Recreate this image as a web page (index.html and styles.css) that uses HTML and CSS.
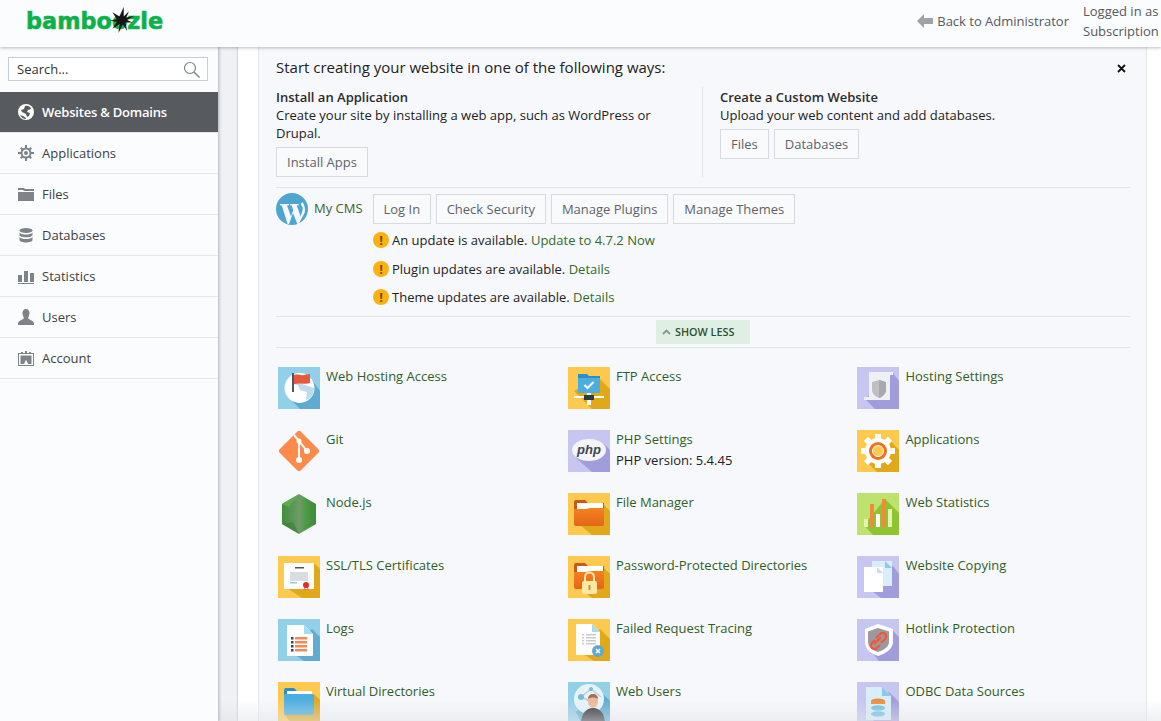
FILE: index.html
```html
<!DOCTYPE html>
<html lang="en">
<head>
<meta charset="utf-8">
<title>Websites &amp; Domains</title>
<link rel="stylesheet" href="styles.css">
</head>
<body>
<div class="app">
  <header class="topbar">
    <div class="logo"><span>bamboozle</span><svg class="logo-star" viewBox="0 0 30 30" width="26" height="26"><path fill="#161616" d="M17 0l0 11 6-6-3 7 9-2-8 5 6 3-8 0 2 10-5-8-5 10 1-10-8 5 5-8-8-1 8-2-5-8 8 5z"/></svg></div>
    <div class="top-right">
      <a class="back"><svg viewBox="0 0 16 14" width="16" height="14"><path fill="#9ea3a8" d="M0 7l7-7v4h9v6H7v4z"/></svg>Back to Administrator</a>
      <div class="logged">Logged in as<br>Subscription</div>
    </div>
  </header>
  <div class="body-row">
    <aside class="sidebar">
      <div class="search-wrap">
        <div class="search"><span>Search...</span><svg viewBox="0 0 17 17" width="17" height="17"><circle cx="7" cy="7" r="5.500" fill="none" stroke="#7d8389" stroke-width="1.200"/><path d="M11 11l5.500 5.500" stroke="#7d8389" stroke-width="1.500"/></svg></div>
      </div>
      <nav class="nav">
        <a class="nav-item active"><svg viewBox="0 0 16 16" width="16" height="16"><circle cx="8" cy="8" r="8" fill="#fff"/><path fill="#575a5f" d="M7 2c3-1 6 1 6 3l-3 1-1 2 3 1-1 3-2 1-1-3-4-2-1-2 3-1zM2 11l3 1 3 2v1c-3 0-5-2-6-4z"/></svg><span class="nav-active-label">Websites &amp; Domains</span></a>
        <a class="nav-item"><svg viewBox="0 0 16 16" width="16" height="16"><g fill="#7d8389"><path d="M8 2.500a5.500 5.500 0 1 0 0 11 5.500 5.500 0 0 0 0-11zm0 2a3.500 3.500 0 1 1 0 7 3.500 3.500 0 0 1 0-7z"/><circle cx="8" cy="8" r="2"/><path d="M7 0h2v3H7zM7 13h2v3H7zM0 7h3v2H0zM13 7h3v2h-3zM2 3.400L3.400 2l2 2L4 5.400zM10.600 12L12 10.600l2 2L12.600 14zM2 12.600l2-2L5.400 12l-2 2zM10.600 4l2-2L14 3.400l-2 2z"/></g></svg>Applications</a>
        <a class="nav-item"><svg viewBox="0 0 16 14" width="16" height="14"><path fill="#7d8389" d="M0 1h6l1 1h9v2H6L5 3H0zM0 5h16v9H0z"/></svg>Files</a>
        <a class="nav-item"><svg viewBox="0 0 14 15" width="16" height="15"><g fill="#7d8389"><ellipse cx="7" cy="2.500" rx="6.500" ry="2.500"/><path d="M.5 4.500c1 1.500 3.500 2 6.500 2s5.500-.5 6.500-2v2.500c0 1.300-3 2.300-6.500 2.300S.5 8.300.5 7zM.5 9c1 1.500 3.500 2 6.500 2s5.500-.5 6.500-2v3c0 1.500-3 2.500-6.500 2.500S.5 13.500.5 12z"/></g></svg>Databases</a>
        <a class="nav-item"><svg viewBox="0 0 16 15" width="16" height="15"><path fill="#7d8389" d="M0 6h4v7H0zM6 2h4v11H6zM12 4h4v9h-4zM0 14h16v1H0z"/></svg>Statistics</a>
        <a class="nav-item"><svg viewBox="0 0 16 16" width="16" height="16"><path fill="#7d8389" d="M8 0c2.200 0 3.500 1.700 3.500 4S10.500 8 10 9c0 1.500 6 2.500 6 5.500V16H0v-1.500C0 11.500 6 10.500 6 9 5.500 8 4.500 6.300 4.500 4S5.800 0 8 0z"/></svg>Users</a>
        <a class="nav-item"><svg viewBox="0 0 16 15" width="16" height="15"><path fill="#7d8389" fill-rule="evenodd" d="M0 2h3V1h2v1h6V1h2v1h3v13H0zm1 1v11h14V3zM2.500 4.500h11V13H10L8 8.500 6 13H2.500zM7 0h2v2H7z"/></svg>Account</a>
      </nav>
    </aside>
    <div class="gutter"></div>
    <main class="content">
      <section class="panel">
        <div class="intro">
          <h2 class="intro-title">Start creating your website in one of the following ways:</h2>
          <svg class="close" viewBox="0 0 9 9" width="9" height="9"><path d="M1 1l7 7M8 1L1 8" stroke="#111" stroke-width="1.800"/></svg>
          <div class="ways">
            <div class="way way-left">
              <h3>Install an Application</h3>
              <p>Create your site by installing a web app, such as WordPress or Drupal.</p>
              <div class="btns"><a class="btn">Install Apps</a></div>
            </div>
            <div class="way way-right">
              <h3>Create a Custom Website</h3>
              <p>Upload your web content and add databases.</p>
              <div class="btns"><a class="btn">Files</a><a class="btn">Databases</a></div>
            </div>
          </div>
        </div>
        <div class="cms">
          <div class="cms-head">
            <svg class="wp" viewBox="0 0 32 32" width="32" height="32"><circle cx="16" cy="16" r="16" fill="#4fa5cf"/><path fill="#f7f8fb" d="M4 11h9v1.300l-2 .3 4 11 2.200-6.500-1.500-4.500-1.500-.3V11h8.500v1.300l-2 .3 4 11 1.800-6c.8-3-.3-4-1.200-5.300-.6-1-.3-2.800 1.500-3C28 12 30 16 28.500 20l-5.800 11h-1.400l-4.300-11-4 11h-1.400L5.800 12.600 4 12.300z"/></svg>
            <span class="cms-name">My CMS</span>
            <div class="btns cms-btns"><a class="btn btn-tight">Log In</a><a class="btn">Check Security</a><a class="btn">Manage Plugins</a><a class="btn">Manage Themes</a></div>
          </div>
          <ul class="alerts">
            <li><i class="warn">!</i>An update is available. <a>Update to 4.7.2 Now</a></li>
            <li><i class="warn">!</i>Plugin updates are available. <a>Details</a></li>
            <li><i class="warn">!</i>Theme updates are available. <a>Details</a></li>
          </ul>
        </div>
        <div class="showbar"><a class="show-less"><svg viewBox="0 0 9 6" width="9" height="6"><path d="M1 5l3.500-3.500L8 5" fill="none" stroke="#7f9c87" stroke-width="1.800"/></svg>SHOW LESS</a></div>
        <div class="tools">
          <a class="tool"><svg viewBox="0 0 42 42"><rect width="42" height="42" fill="#92cfe9"/><path fill="#5fabd2" d="M32 10L42 24V42H22L8 28z"/><circle cx="21.500" cy="21" r="15" fill="#fff"/><path fill="#bcdcec" d="M20 8l6 3-2 6 6 2 6 2c0 6-3 10-8 12l1-8-7-2-2-5-6-1c0-4 3-8 6-9z"/><rect x="14" y="6" width="2" height="19" fill="#455a6b"/><path fill="#e8583c" d="M16 8c4-1.500 6 1 10 0s4-.5 6-1v9c-4 1.500-8 0-11 .5l-5 .5z"/></svg><span class="tool-name">Web Hosting Access</span></a>
          <a class="tool"><svg viewBox="0 0 42 42"><rect width="42" height="42" fill="#fdc94f"/><path fill="#e1a81a" d="M30 10L42 22V42H24L6 24z"/><path fill="#2b8ec7" d="M10 7h9l2 2h11v4H10z"/><rect x="10" y="11" width="22" height="15" rx="1" fill="#4caee0"/><path d="M16.500 18l3 3 6-6" fill="none" stroke="#fff" stroke-width="2"/><rect x="6" y="29" width="30" height="2" fill="#fff"/><rect x="19" y="26" width="4" height="12" fill="#fff"/><rect x="16" y="28" width="10" height="5" fill="#34393f"/></svg><span class="tool-name">FTP Access</span></a>
          <a class="tool"><svg viewBox="0 0 42 42"><rect width="42" height="42" fill="#c6c6f1"/><path fill="#a19cdc" d="M36 6l6 8V42H18L8 32z"/><path fill="#eef0f6" d="M12 5h24v3h-3v25H7v-3h5z"/><path fill="#c0c0c4" d="M15 15l7-2 7 2v8c0 4-4 7-7 8-3-1-7-4-7-8z"/><path fill="#a9a9ae" d="M22 13l7 2v8c0 4-4 7-7 8z"/></svg><span class="tool-name">Hosting Settings</span></a>

          <a class="tool"><svg viewBox="0 0 42 42"><rect x="6" y="6" width="30" height="30" rx="3" transform="rotate(45 21 21)" fill="#fc8a4a"/><path d="M16 5l5 6v19M21 11l8 10" fill="none" stroke="#fff" stroke-width="2"/><circle cx="21" cy="30" r="3" fill="#fff"/><circle cx="29" cy="21" r="3" fill="#fff"/><circle cx="21" cy="11" r="2.500" fill="#fff"/></svg><span class="tool-name">Git</span></a>
          <a class="tool tool-multi"><svg viewBox="0 0 42 42"><rect width="42" height="42" fill="#c6c6f1"/><path fill="#a19cdc" d="M36 14L42 20V42H24L8 28z"/><ellipse cx="21" cy="20" rx="17" ry="11" fill="#f4f4f4"/><text x="21" y="24" class="php-text" text-anchor="middle">php</text></svg><span class="tool-text"><span class="tool-name">PHP Settings</span><span class="tool-sub">PHP version: 5.4.45</span></span></a>
          <a class="tool"><svg viewBox="0 0 42 42"><rect width="42" height="42" fill="#fdc94f"/><path fill="#e1a81a" d="M33 10L42 20V42H20L8 30z"/><g fill="#fff"><circle cx="21" cy="21" r="13"/><path d="M18 4h6v6h-6zM18 32h6v6h-6zM4 18h6v6H4zM32 18h6v6h-6z"/><path d="M18 4h6v6h-6zM18 32h6v6h-6zM4 18h6v6H4zM32 18h6v6h-6z" transform="rotate(45 21 21)"/></g><circle cx="21" cy="21" r="9" fill="#f0701f"/><circle cx="21" cy="21" r="5.500" fill="#fdc94f" stroke="#fff"/></svg><span class="tool-name">Applications</span></a>

          <a class="tool"><svg viewBox="0 0 42 42"><defs><linearGradient id="nodeGrad" x1="0" x2="1" y1="0" y2="0"><stop offset="0" stop-color="#3f8f3c"/><stop offset=".5" stop-color="#6f9a68"/><stop offset=".72" stop-color="#4c9a46"/><stop offset="1" stop-color="#3d8a3a"/></linearGradient></defs><path fill="url(#nodeGrad)" d="M21 1l17 10v20L21 41 4 31V11z"/><path fill="#5fb14d" d="M21 1L4 11l7 3z" opacity=".8"/><path fill="#2f7a30" d="M4 31l17 10-6-12z" opacity=".5"/></svg><span class="tool-name">Node.js</span></a>
          <a class="tool"><svg viewBox="0 0 42 42"><defs><linearGradient id="orangeGrad" x1="0" x2="0" y1="0" y2="1"><stop offset="0" stop-color="#f6811f"/><stop offset="1" stop-color="#e2671a"/></linearGradient></defs><rect width="42" height="42" fill="#fdc94f"/><path fill="#e1a81a" d="M36 12L42 18V42H24L6 27z"/><path fill="#c9581c" d="M6 9a2 2 0 0 1 2-2h9l3 3h16v6H6z"/><path fill="#fff" d="M9 10h26v6H9z"/><path fill="url(#orangeGrad)" d="M6 16h12l4-1h14v16a2 2 0 0 1-2 2H8a2 2 0 0 1-2-2z"/></svg><span class="tool-name">File Manager</span></a>
          <a class="tool"><svg viewBox="0 0 42 42"><rect width="42" height="42" fill="#bde26e"/><path fill="#8ec42f" d="M28 6L42 20V42H16L7 32z"/><rect x="7" y="26" width="4" height="8" fill="#e4f3b4"/><rect x="13" y="11" width="4" height="23" fill="#f18a3a"/><rect x="19" y="21" width="4" height="13" fill="#fff"/><rect x="25" y="6" width="4" height="28" fill="#f18a3a"/><rect x="31" y="16" width="4" height="18" fill="#e4f3b4"/></svg><span class="tool-name">Web Statistics</span></a>

          <a class="tool"><svg viewBox="0 0 42 42"><rect width="42" height="42" fill="#fdc94f"/><path fill="#e1a81a" d="M36 7l6 6V42H24L6 30z"/><rect x="6" y="7" width="30" height="26" fill="#fff"/><rect x="12" y="16" width="18" height="9" fill="#d8dde2"/><rect x="17" y="11" width="9" height="1.500" fill="#555"/><rect x="12" y="26" width="7" height="1.500" fill="#8ecae8"/><circle cx="28" cy="29" r="3" fill="#e32b2b"/><path fill="#e32b2b" d="M26 30h1.500l-.5 5zM28.500 30H30l.5 5z"/></svg><span class="tool-name">SSL/TLS Certificates</span></a>
          <a class="tool"><svg viewBox="0 0 42 42"><rect width="42" height="42" fill="#fdc94f"/><path fill="#e1a81a" d="M36 12L42 18V42H24L6 27z"/><path fill="#c9581c" d="M6 9a2 2 0 0 1 2-2h9l3 3h16v6H6z"/><path fill="#fff" d="M9 10h26v6H9z"/><path fill="url(#orangeGrad)" d="M6 16h12l4-1h14v16a2 2 0 0 1-2 2H8a2 2 0 0 1-2-2z"/><path d="M17 26v-5a4.500 4.500 0 0 1 9 0v5" fill="none" stroke="#fde8a6" stroke-width="2"/><rect x="14" y="25" width="15" height="13" rx="2" fill="#fde8a6"/><rect x="20.500" y="29" width="2" height="5" fill="#c9912a"/></svg><span class="tool-name">Password-Protected Directories</span></a>
          <a class="tool"><svg viewBox="0 0 42 42"><rect width="42" height="42" fill="#c6c6f1"/><path fill="#a19cdc" d="M36 10L42 18V42H24L7 29z"/><rect x="15" y="5" width="20" height="25" fill="#d8eefa"/><path fill="#8ec9ea" d="M28 5l7 7h-7z"/><rect x="7" y="11" width="19" height="25" fill="#fff"/><path fill="#cfd6f0" d="M20 11l6 6h-6z"/></svg><span class="tool-name">Website Copying</span></a>

          <a class="tool"><svg viewBox="0 0 42 42"><rect width="42" height="42" fill="#92cfe9"/><path fill="#5fabd2" d="M34 10l8 8V42H26L9 30z"/><path fill="#fff" d="M9 6h17l9 9v21a1 1 0 0 1-1 1H10a1 1 0 0 1-1-1z"/><path fill="#a8daf2" d="M26 6l9 9h-9z"/><g fill="#f18a5a"><rect x="17" y="18" width="12" height="2.500"/><rect x="17" y="22" width="12" height="2.500"/><rect x="17" y="26" width="12" height="2.500"/><rect x="17" y="30" width="12" height="2.500"/></g><g fill="#444"><rect x="13" y="18" width="2.500" height="2.500"/><rect x="13" y="22" width="2.500" height="2.500"/><rect x="13" y="26" width="2.500" height="2.500"/><rect x="13" y="30" width="2.500" height="2.500"/></g></svg><span class="tool-name">Logs</span></a>
          <a class="tool"><svg viewBox="0 0 42 42"><rect width="42" height="42" fill="#fdc94f"/><path fill="#e1a81a" d="M32 10l10 10V42H26L8 30z"/><path fill="#fff" d="M8 5h16l8 8v23H8z"/><path fill="#a8daf2" d="M24 5l8 8h-8z"/><g fill="#c7cbd0"><rect x="18" y="15" width="10" height="1.500"/><rect x="18" y="18" width="10" height="1.500"/><rect x="18" y="21" width="10" height="1.500"/><rect x="18" y="24" width="10" height="1.500"/><rect x="14" y="15" width="2" height="1.500"/><rect x="14" y="18" width="2" height="1.500"/><rect x="14" y="21" width="2" height="1.500"/><rect x="14" y="24" width="2" height="1.500"/></g><circle cx="30" cy="32" r="6" fill="#5da9d6"/><path d="M28 30l4 4M32 30l-4 4" stroke="#fff" stroke-width="1.600"/></svg><span class="tool-name">Failed Request Tracing</span></a>
          <a class="tool"><svg viewBox="0 0 42 42"><rect width="42" height="42" fill="#c6c6f1"/><path fill="#a19cdc" d="M34 10l8 8V42H22L9 26z"/><path fill="#fff" d="M21 5l15 5v13c0 7-8 12-15 14C14 35 8 30 8 23V10z"/><path fill="#9a9a9e" d="M21 9l11 3.500V23c0 5-6 8.500-11 10-5-1.500-10-5-10-10V12.500z"/><path d="M19 19l4-4a3 3 0 0 1 5 5l-4 4M18 21l-3 3a3 3 0 0 0 5 5l3-3M17 25l7-7" fill="none" stroke="#ee5a3c" stroke-width="2.400"/></svg><span class="tool-name">Hotlink Protection</span></a>

          <a class="tool"><svg viewBox="0 0 42 42"><rect width="42" height="42" fill="#fdc94f"/><path fill="#e1a81a" d="M36 12l6 6V42H14L6 32z"/><path fill="#2e8ec8" d="M6 8a2 2 0 0 1 2-2h8l3 3h15v6H6z"/><path fill="#fff" d="M9 9h25v6H9z"/><rect x="6" y="12" width="30" height="21" rx="2" fill="#4caee0"/></svg><span class="tool-name">Virtual Directories</span></a>
          <a class="tool"><svg viewBox="0 0 42 42"><rect width="42" height="42" fill="#92cfe9"/><path fill="#5fabd2" d="M33 10l9 9V42H14L8 30z"/><circle cx="21" cy="17" r="15" fill="#e8f3f8"/><path d="M13 15l10-8 10 8M13 15l11 5" fill="none" stroke="#a8d2e8" stroke-width="1.500"/><circle cx="13" cy="15" r="3" fill="#7cb9dd"/><circle cx="23" cy="7" r="2" fill="#7cb9dd"/><path fill="#2f3438" d="M13 42c0-9 4-16 12-16s12 7 12 16z"/><ellipse cx="25" cy="19" rx="5" ry="7" fill="#efb79a"/><path fill="#a66d4f" d="M20 17c0-3 2-5 5-5s5 2 5 5c-3-2-7-2-10 0z"/></svg><span class="tool-name">Web Users</span></a>
          <a class="tool"><svg viewBox="0 0 42 42"><rect width="42" height="42" fill="#c6c6f1"/><path fill="#a19cdc" d="M32 10l10 10V42H20L8 30z"/><path fill="#d8eefa" d="M9 5h16l9 9v24H9z"/><path fill="#8ec9ea" d="M25 5l9 9h-9z"/><ellipse cx="21" cy="19" rx="7" ry="2.500" fill="#f18a3a"/><rect x="14" y="19" width="14" height="3" fill="#f18a3a"/><ellipse cx="21" cy="26" rx="7" ry="2.800" fill="#6ec0e6"/><ellipse cx="21" cy="32" rx="7" ry="2.800" fill="#6ec0e6"/></svg><span class="tool-name">ODBC Data Sources</span></a>
        </div>
      </section>
    </main>
  </div>
  <div class="fade"></div>
</div>
</body>
</html>
```
FILE: styles.css
```css
* { box-sizing: border-box; }
html, body { margin: 0; height: 100%; overflow: hidden; }
body { font-family: "Open Sans", "Noto Sans", sans-serif; font-size: 13px; line-height: 18px; color: #222; background: #fff; }
a { color: inherit; text-decoration: none; }
h2, h3, p, ul { margin: 0; padding: 0; }

.app { position: relative; height: 721px; overflow: hidden; display: flex; flex-direction: column; }
.topbar { position: relative; z-index: 2; flex: 0 0 47px; display: flex; justify-content: space-between; background: #fbfcfe; box-shadow: 0 1px 3px rgba(60, 65, 75, .35); }
.logo { position: relative; display: flex; align-items: center; height: 42px; padding-left: 26px; font-family: "DejaVu Sans", sans-serif; font-weight: 700; font-size: 22.400px; color: #0cb14b; -webkit-text-stroke: .6px #0cb14b; }
.logo-star { position: absolute; left: 109px; top: 7px; }
.top-right { display: flex; align-items: flex-start; }
.back { display: flex; align-items: center; gap: 4px; height: 42px; margin-right: 14px; color: #55595e; }
.logged { width: 78px; padding-top: 1px; line-height: 20px; color: #55595e; white-space: nowrap; }

.body-row { flex: 1; display: flex; min-height: 0; }
.sidebar { flex: 0 0 219px; background: #fbfcfe; border-right: 1px solid #c6cad0; box-shadow: 1px 0 2px rgba(60, 65, 75, .2); position: relative; z-index: 1; }
.search-wrap { height: 45px; padding: 10px 10px 0 8px; }
.search { display: flex; align-items: center; justify-content: space-between; height: 24px; padding: 0 7px 0 8px; background: #fff; border: 1px solid #c9ced6; color: #333; }
.nav-item { display: flex; align-items: center; height: 41px; padding-left: 18px; border-bottom: 1px solid #e4e7ec; color: #3d4045; }
.nav-item svg { width: 16px; margin-right: 8px; flex: none; }
.nav-item.active { background: #575a5f; color: #fff; font-weight: 600; border-bottom-color: #e4e7ec; }
.nav-active-label { letter-spacing: -.22px; }
.gutter { flex: 0 0 19px; background: #eff1f4; box-shadow: inset -1px 0 1px rgba(120, 125, 135, .25); }
.content { flex: 1; min-width: 0; padding: 0 14px 0 20px; background: #fff; }
.panel { height: 100%; padding: 0 16px 0 17px; background: #f7f8fb; border-left: 1px solid #e6e8ec; border-right: 1px solid #e6e8ec; }

.intro { position: relative; height: 141px; padding-top: 10px; border-bottom: 1px solid #e1e3e7; }
.intro-title { font-size: 15px; line-height: 20px; font-weight: 400; color: #222; }
.close { position: absolute; top: 17px; right: 4px; }
.ways { display: flex; margin-top: 11px; }
.way h3 { font-size: 13px; line-height: 18px; font-weight: 600; color: #2b2b2b; }
.way-left { width: 427px; height: 90px; padding-right: 20px; border-right: 1px solid #e1e3e7; margin-top: -1px; padding-top: 1px; }
.way-right { padding-left: 17px; }
.way-right .btns { gap: 5px; }
.btns { display: flex; gap: 4px; margin-top: 5px; }
.btn { display: block; height: 30px; padding: 0 10px; line-height: 28px; border: 1px solid #d7dade; color: #5f6368; background: #f9fafc; white-space: nowrap; }
.btn-tight { padding: 0 9.500px; }

.cms { height: 129px; padding-top: 6px; border-bottom: 1px solid #e1e3e7; }
.cms-head { display: flex; align-items: flex-start; }
.wp { flex: none; margin-top: -1px; }
.cms-name { width: 65px; padding-left: 6px; line-height: 28px; color: #3b6427; white-space: nowrap; }
.cms-btns { margin-top: 0; gap: 5px; }
.alerts { list-style: none; padding-left: 97px; margin-top: 1px; }
.alerts li { display: flex; align-items: center; height: 28.500px; white-space: pre; }
.alerts a { color: #2f6b2a; }
.warn { flex: none; display: block; width: 16px; height: 16px; margin-right: 3px; border-radius: 50%; background: #fdb111; color: #7a4a00; font-style: normal; font-weight: 700; font-size: 13px; line-height: 16px; text-align: center; }

.showbar { height: 31px; display: flex; justify-content: center; align-items: center; border-bottom: 1px solid #e1e3e7; }
.show-less { display: flex; align-items: center; gap: 4px; height: 24px; width: 94px; padding: 0 0 0 6px; background: #e0efe4; font-size: 10.800px; font-weight: 600; color: #2b4f2c; white-space: nowrap; }

.tools { display: grid; grid-template-columns: 290px 289.400px 1fr; grid-auto-rows: 63px; padding: 19px 0 0 2px; }
.tool { display: flex; align-items: flex-start; color: #2f5f27; }
.tool > svg { flex: none; width: 42px; height: 42px; margin-right: 6px; }
.tool-name { display: block; line-height: 18px; }
.tool-text { display: block; }
.tool-sub { display: block; margin-top: 3px; color: #222; }
.php-text { font-family: "Liberation Sans", sans-serif; font-size: 13px; font-weight: 700; font-style: italic; fill: #3d4752; }

.fade { position: absolute; left: 0; right: 0; bottom: 0; height: 22px; background: linear-gradient(rgba(235, 237, 240, 0), rgba(225, 228, 232, .55)); pointer-events: none; }
```
